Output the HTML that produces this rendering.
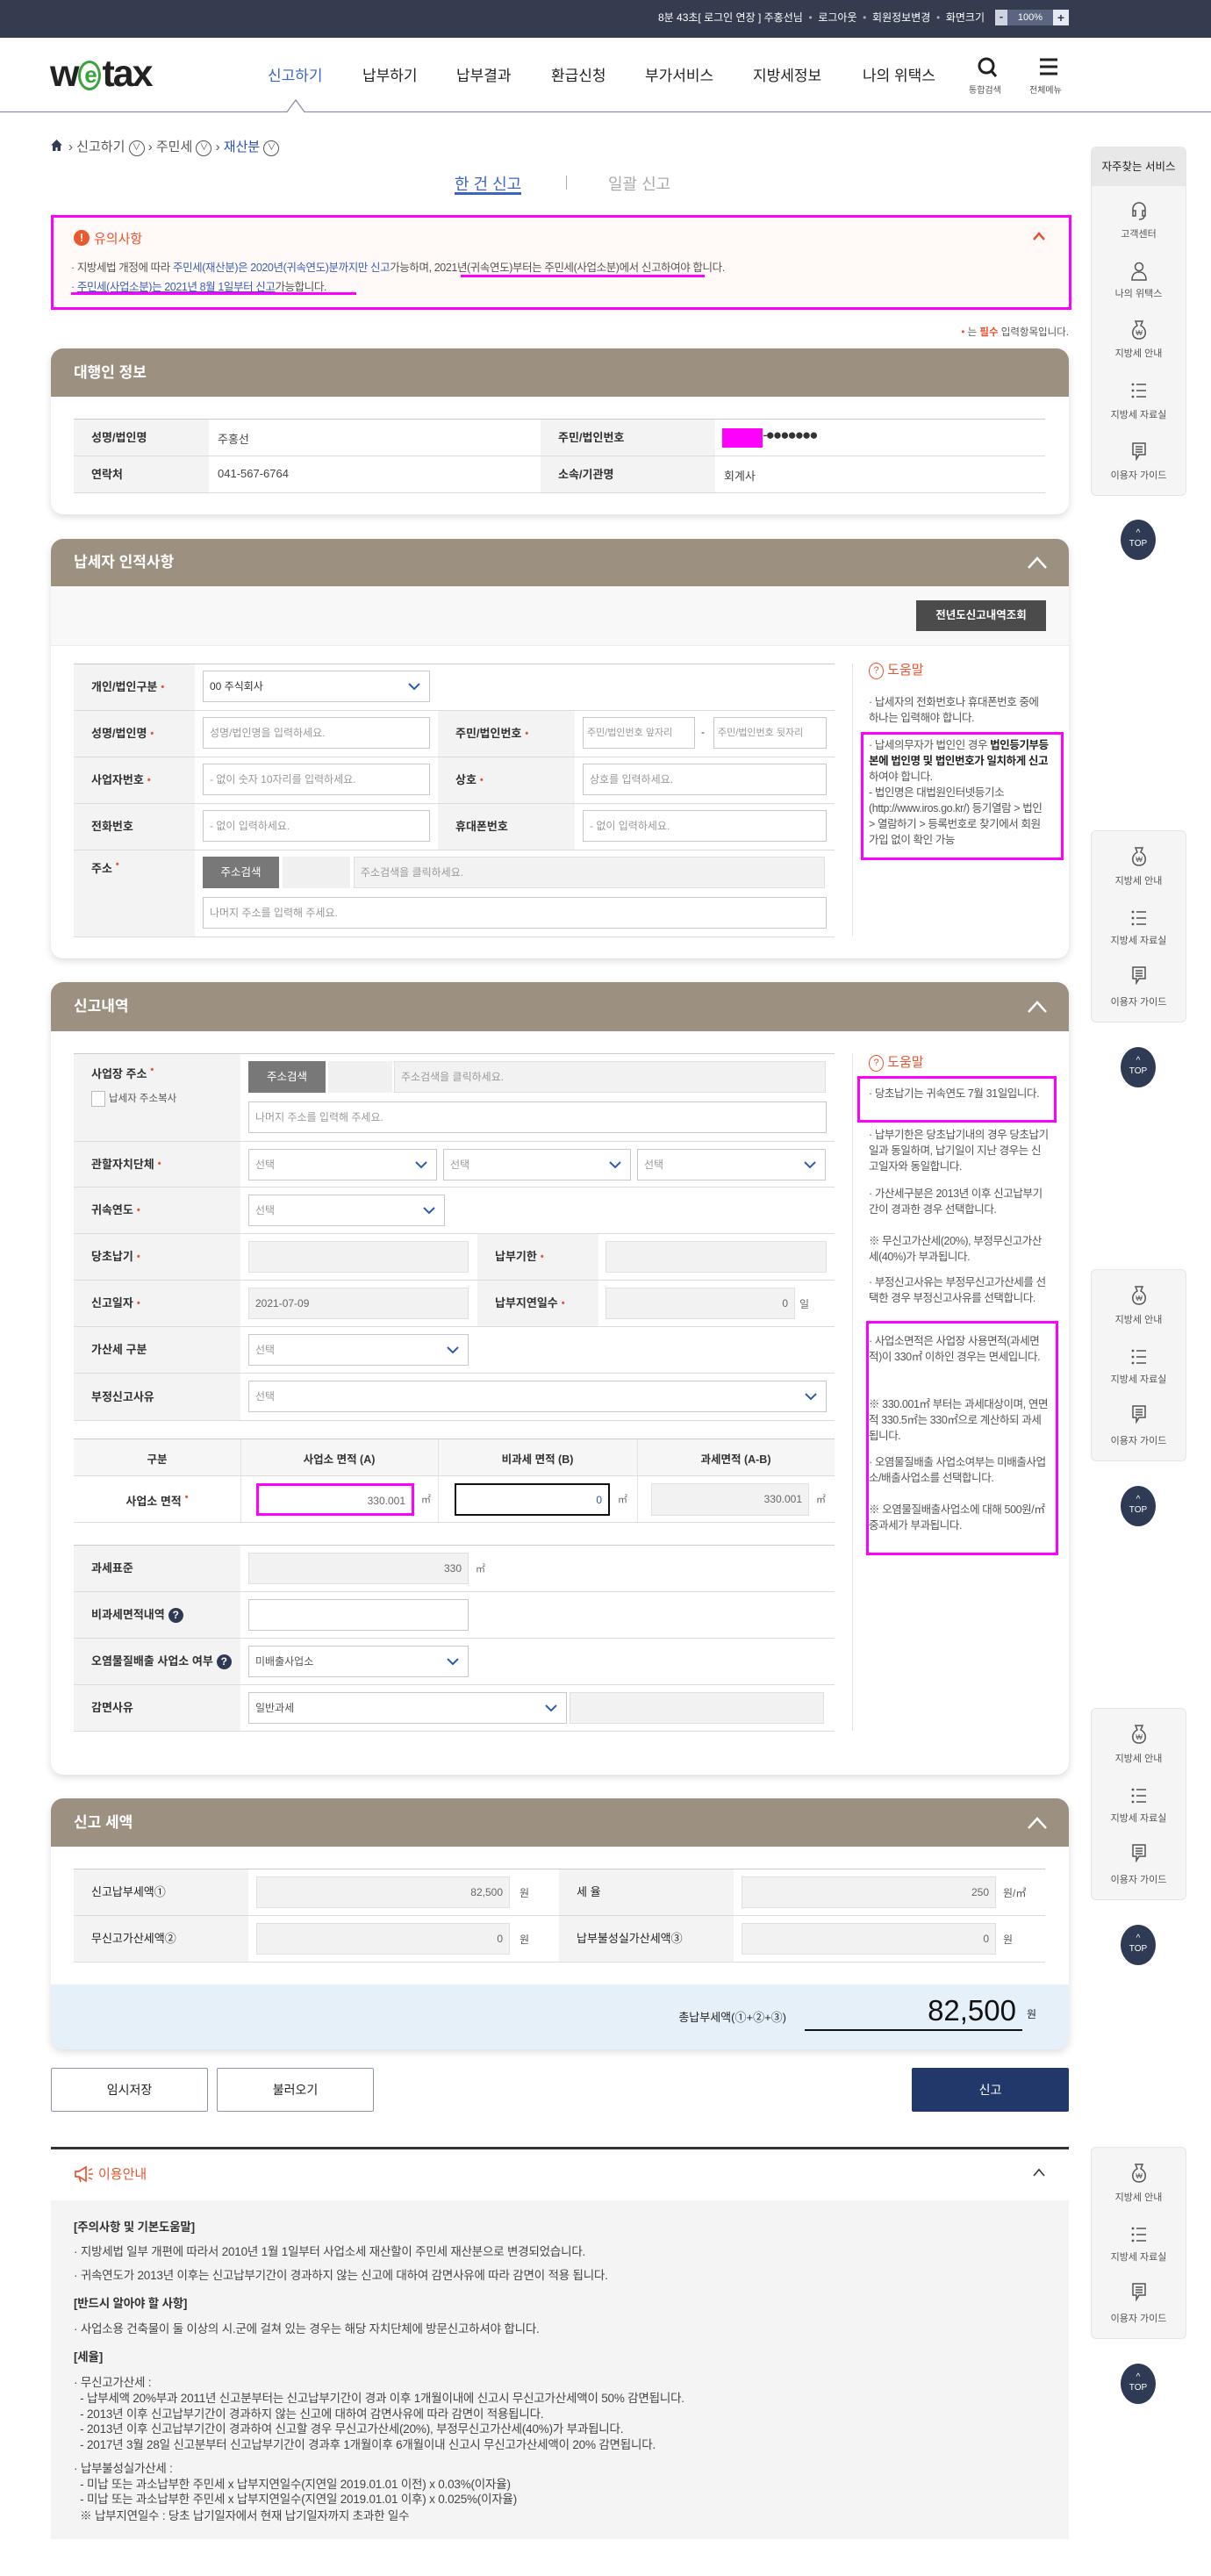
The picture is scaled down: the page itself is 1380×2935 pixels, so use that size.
<!DOCTYPE html>
<html lang="ko"><head><meta charset="utf-8">
<style>
body{margin:0;width:1380px;height:2935px;position:relative;font-family:"Liberation Sans","Noto Sans CJK KR",sans-serif;color:#333;background:#fff;overflow:hidden}
.a{position:absolute}
.card{position:absolute;left:58px;width:1160px;background:#fff;border-radius:14px;box-shadow:0 3px 9px rgba(0,0,0,.14)}
.hd{position:absolute;left:0;top:0;width:1160px;background:#9c9080;border-radius:14px 14px 0 0;color:#fff;font-size:17px;font-weight:bold;box-sizing:border-box;padding-left:26px}
.lb{position:absolute;background:#f3f3f3;font-size:13px;font-weight:bold;color:#333;box-sizing:border-box;padding-left:20px;white-space:nowrap}
.in{position:absolute;box-sizing:border-box;border:1px solid #c8c8c8;background:#fff;height:36px;font-size:12px;color:#999;padding:0 7px;line-height:34px;white-space:nowrap;overflow:hidden}
.g{background:#f2f2f2;border-color:#e0e0e0}
.r{text-align:right}
.hl{position:absolute;height:1px;background:#dcdcdc}
.req::after{content:"•";color:#e8542e;margin-left:4px;font-size:11px;vertical-align:top}
.chev{position:absolute;right:10px;top:13px}
.t{position:absolute;white-space:nowrap}
.help{position:absolute;left:990px;width:205px;font-size:12.5px;line-height:18px;color:#555;letter-spacing:-.4px}
.mg{position:absolute;border:3px solid #f0f;box-sizing:border-box}
.sp{position:absolute;left:1243px;width:109px;background:#f5f5f5;border:1px solid #e6e6e6;border-radius:6px;box-sizing:border-box}
.si{position:absolute;left:0;width:107px;text-align:center;font-size:11px;color:#555}
.top{position:absolute;left:1277px;width:40px;height:46px;border-radius:20px/23px;background:#2f3a55;color:#fff;font-size:10px;text-align:center;line-height:12px;box-sizing:border-box;padding-top:10px}
.qm{display:inline-block;width:17px;height:17px;border-radius:50%;background:#2f3a55;color:#fff;font-size:12px;text-align:center;line-height:17px;margin-left:4px;vertical-align:middle}
.gd{position:absolute;left:84px;font-size:13.5px;color:#444;white-space:nowrap;letter-spacing:-.2px}
.bc{display:inline-block;width:16px;height:16px;border:1px solid #555;border-radius:50%;font-size:10px;line-height:16px;text-align:center;vertical-align:1px}
</style></head><body>

<!-- top bar -->
<div class="a" style="left:0;top:0;width:1380px;height:43px;background:#353c50"></div>
<div class="t" style="right:258px;top:11px;font-size:12px;color:#fff">8분 43초[ 로그인 연장 ] 주홍선님 &nbsp;<span style="color:#aab">•</span>&nbsp; 로그아웃 &nbsp;<span style="color:#aab">•</span>&nbsp; 회원정보변경 &nbsp;<span style="color:#aab">•</span>&nbsp; 화면크기</div>
<div class="a" style="left:1134px;top:11px;width:14px;height:18px;background:#cfd3e0;color:#2f3a55;font-size:13px;text-align:center;line-height:16px;font-weight:bold">-</div>
<div class="a" style="left:1148px;top:11px;width:52px;height:18px;background:#5b6580;color:#fff;font-size:11px;text-align:center;line-height:18px">100%</div>
<div class="a" style="left:1200px;top:11px;width:18px;height:18px;background:#e6e9f2;color:#2f3a55;font-size:14px;text-align:center;line-height:18px;font-weight:bold">+</div>

<!-- header -->
<div class="t" style="left:57px;top:60px;font-size:43px;font-weight:bold;color:#222;letter-spacing:-2px;font-family:'Liberation Sans',sans-serif">w<span style="color:#3aa33a;display:inline-block;border:3px solid #3aa33a;border-radius:50%;width:20px;height:28px;font-size:26px;line-height:26px;text-align:center;vertical-align:4px;margin:0 1px">e</span>tax</div>
<div class="t" style="left:305px;top:72px;font-size:17px;color:#3b64c4">신고하기</div>
<div class="t" style="left:413px;top:72px;font-size:17px;color:#222">납부하기</div>
<div class="t" style="left:520px;top:72px;font-size:17px;color:#222">납부결과</div>
<div class="t" style="left:628px;top:72px;font-size:17px;color:#222">환급신청</div>
<div class="t" style="left:735px;top:72px;font-size:17px;color:#222">부가서비스</div>
<div class="t" style="left:858px;top:72px;font-size:17px;color:#222">지방세정보</div>
<div class="t" style="left:983px;top:72px;font-size:17px;color:#222">나의 위택스</div>
<svg class="a" style="left:1113px;top:64px" width="24" height="26"><circle cx="11" cy="11" r="8" fill="none" stroke="#222" stroke-width="3"/><path d="M16 16l6 7" stroke="#222" stroke-width="3"/></svg>
<div class="t" style="left:1104px;top:94px;font-size:10px;color:#555">통합검색</div>
<svg class="a" style="left:1184px;top:66px" width="22" height="20"><path d="M1 2h20M1 10h20M1 18h20" stroke="#222" stroke-width="3"/></svg>
<div class="t" style="left:1173px;top:94px;font-size:10px;color:#555">전체메뉴</div>
<svg class="a" style="left:0;top:113px" width="1380" height="16"><path d="M0 14.5H327L337 1L347 14.5H1380" fill="none" stroke="#8a8fa2" stroke-width="1.3"/></svg>

<!-- breadcrumb -->
<svg class="a" style="left:57px;top:158px" width="15" height="15"><path d="M7.5 1L1 7.5h2v6.5h3.5V10h2v4H12V7.5h2z" fill="#2f3a55"/></svg>
<div class="t" style="left:78px;top:156px;font-size:15px;color:#555">› 신고하기 <span class="bc">∨</span> › 주민세 <span class="bc">∨</span> › <b style="color:#2b4fb0;font-weight:normal">재산분</b> <span class="bc">∨</span></div>

<!-- tabs -->
<div class="t" style="left:518px;top:196px;font-size:18px;color:#3b64c4">한 건 신고</div>
<div class="a" style="left:518px;top:219px;width:76px;height:3px;background:#3b64c4"></div>
<div class="a" style="left:645px;top:200px;width:1px;height:16px;background:#aaa"></div>
<div class="t" style="left:693px;top:196px;font-size:18px;color:#aaa">일괄 신고</div>

<!-- notice -->
<div class="a" style="left:58px;top:245px;width:1163px;height:108px;background:#fffaf8;border:3px solid #f0f;box-sizing:border-box"></div>
<div class="a" style="left:84px;top:262px;width:18px;height:18px;border-radius:50%;background:#ea5a2e;color:#fff;font-size:13px;font-weight:bold;text-align:center;line-height:18px">!</div>
<div class="t" style="left:107px;top:261px;font-size:15px;color:#e8542e">유의사항</div>
<svg class="a" style="left:1176px;top:263px" width="16" height="12"><path d="M2 10l6-7 6 7" fill="none" stroke="#e8542e" stroke-width="2.5"/></svg>
<div class="t" style="left:81px;top:294px;font-size:12.5px;color:#555;letter-spacing:-.4px">· 지방세법 개정에 따라 <span style="color:#3b5fb5">주민세(재산분)은 2020년(귀속연도)분까지만 신고</span>가능하며, 2021년(귀속연도)부터는 주민세(사업소분)에서 신고하여야 합니다.</div>
<div class="a" style="left:525px;top:313px;width:278px;height:3px;background:#f0f"></div>
<div class="t" style="left:81px;top:316px;font-size:12.5px;color:#3b5fb5;letter-spacing:-.4px">· <u>주민세(사업소분)는 2021년 8월 1일부터 신고</u><span style="color:#555">가능합니다.</span></div>
<div class="a" style="left:81px;top:333px;width:325px;height:3px;background:#f0f"></div>

<div class="t" style="right:162px;top:370px;font-size:11.5px;color:#555"><span style="color:#e8542e">•</span> 는 <b style="color:#e8542e">필수</b> 입력항목입니다.</div>

<!-- Section 1 -->
<div class="card" style="top:397px;height:189px">
 <div class="hd" style="height:55px;line-height:55px">대행인 정보</div>
</div>
<div class="hl" style="left:84px;top:477px;width:1107px;background:#ccc"></div>
<div class="lb" style="left:84px;top:478px;width:154px;height:41px;line-height:41px">성명/법인명</div>
<div class="lb" style="left:616px;top:478px;width:199px;height:41px;line-height:41px">주민/법인번호</div>
<div class="hl" style="left:84px;top:519px;width:1107px"></div>
<div class="lb" style="left:84px;top:520px;width:154px;height:41px;line-height:41px">연락처</div>
<div class="lb" style="left:616px;top:520px;width:199px;height:41px;line-height:41px">소속/기관명</div>
<div class="hl" style="left:84px;top:561px;width:1107px"></div>
<div class="t" style="left:248px;top:490px;font-size:13px;color:#444">주홍선</div>
<div class="a" style="left:823px;top:488px;width:46px;height:22px;background:#f0f"></div>
<div class="t" style="left:869px;top:486px;font-size:17px;color:#333;letter-spacing:-2px">-●●●●●●●</div>
<div class="t" style="left:248px;top:532px;font-size:13px;color:#444">041-567-6764</div>
<div class="t" style="left:825px;top:532px;font-size:13px;color:#444">회계사</div>

<!-- Section 2 -->
<div class="card" style="top:614px;height:478px">
 <div class="hd" style="height:54px;line-height:54px">납세자 인적사항</div>
 <svg class="a" style="left:1112px;top:19px" width="24" height="16"><path d="M2 14L12 3l10 11" fill="none" stroke="#fff" stroke-width="2.5"/></svg>
 <div class="a" style="left:0;top:54px;width:1160px;height:67px;background:#f8f8f8;border-bottom:1px solid #ececec"></div>
 <div class="a" style="left:986px;top:70px;width:148px;height:35px;background:#4b4b4b;color:#fff;font-size:12.5px;font-weight:bold;text-align:center;line-height:35px">전년도신고내역조회</div>
</div>
<div class="hl" style="left:84px;top:756px;width:867px;background:#ccc"></div>
<div class="lb req" style="left:84px;top:757px;width:138px;height:52px;line-height:52px">개인/법인구분</div>
<div class="in" style="left:231px;top:764px;width:259px;color:#333">00 주식회사<svg class="chev" width="14" height="9"><path d="M1 1l6 6 6-6" fill="none" stroke="#2b5bb5" stroke-width="2"/></svg></div>
<div class="hl" style="left:84px;top:809px;width:867px"></div>
<div class="lb req" style="left:84px;top:810px;width:138px;height:52px;line-height:52px">성명/법인명</div>
<div class="in" style="left:231px;top:817px;width:259px">성명/법인명을 입력하세요.</div>
<div class="lb req" style="left:499px;top:810px;width:156px;height:52px;line-height:52px">주민/법인번호</div>
<div class="in" style="left:664px;top:817px;width:128px;font-size:11px;padding:0 4px">주민/법인번호 앞자리</div>
<div class="t" style="left:799px;top:827px;font-size:12px">-</div>
<div class="in" style="left:813px;top:817px;width:129px;font-size:11px;padding:0 4px">주민/법인번호 뒷자리</div>
<div class="hl" style="left:84px;top:862px;width:867px"></div>
<div class="lb req" style="left:84px;top:863px;width:138px;height:52px;line-height:52px">사업자번호</div>
<div class="in" style="left:231px;top:870px;width:259px">- 없이 숫자 10자리를 입력하세요.</div>
<div class="lb req" style="left:499px;top:863px;width:156px;height:52px;line-height:52px">상호</div>
<div class="in" style="left:664px;top:870px;width:278px">상호를 입력하세요.</div>
<div class="hl" style="left:84px;top:915px;width:867px"></div>
<div class="lb" style="left:84px;top:916px;width:138px;height:52px;line-height:52px">전화번호</div>
<div class="in" style="left:231px;top:923px;width:259px">- 없이 입력하세요.</div>
<div class="lb" style="left:499px;top:916px;width:156px;height:52px;line-height:52px">휴대폰번호</div>
<div class="in" style="left:664px;top:923px;width:278px">- 없이 입력하세요.</div>
<div class="hl" style="left:84px;top:968px;width:867px"></div>
<div class="lb req" style="left:84px;top:969px;width:138px;height:98px;padding-top:10px">주소</div>
<div class="a" style="left:231px;top:976px;width:87px;height:36px;background:#787878;color:#fff;font-size:12.5px;text-align:center;line-height:36px">주소검색</div>
<div class="a" style="left:322px;top:976px;width:77px;height:36px;background:#f0f0f0"></div>
<div class="in g" style="left:403px;top:976px;width:537px">주소검색을 클릭하세요.</div>
<div class="in" style="left:231px;top:1022px;width:711px">나머지 주소를 입력해 주세요.</div>
<div class="hl" style="left:84px;top:1067px;width:867px"></div>
<div class="a" style="left:971px;top:756px;width:1px;height:311px;background:#e3e3e3"></div>
<div class="t" style="left:990px;top:752px;font-size:15px;color:#e8542e"><span style="display:inline-block;width:15px;height:17px;border:1.5px solid #e8542e;border-radius:50%;font-size:11px;line-height:17px;text-align:center;vertical-align:1px">?</span> 도움말</div>
<div class="help" style="top:791px">· 납세자의 전화번호나 휴대폰번호 중에 하나는 입력해야 합니다.</div>
<div class="help" style="top:840px">· 납세의무자가 법인인 경우 <b style="color:#222">법인등기부등본에 법인명 및 법인번호가 일치하게 신고</b>하여야 합니다.<br>- 법인명은 대법원인터넷등기소 (http://www.iros.go.kr/) 등기열람 &gt; 법인 &gt; 열람하기 &gt; 등록번호로 찾기에서 회원가입 없이 확인 가능</div>
<div class="mg" style="left:981px;top:834px;width:231px;height:146px"></div>

<!-- Section 3 -->
<div class="card" style="top:1119px;height:903px">
 <div class="hd" style="height:56px;line-height:56px">신고내역</div>
 <svg class="a" style="left:1112px;top:20px" width="24" height="16"><path d="M2 14L12 3l10 11" fill="none" stroke="#fff" stroke-width="2.5"/></svg>
</div>
<div class="hl" style="left:84px;top:1200px;width:867px;background:#ccc"></div>
<div class="lb req" style="left:84px;top:1201px;width:190px;height:99px;padding-top:12px">사업장 주소</div>
<div class="a" style="left:104px;top:1243px;width:14px;height:16px;border:1px solid #bbb;background:#fff"></div>
<div class="t" style="left:124px;top:1243px;font-size:11.5px;color:#555">납세자 주소복사</div>
<div class="a" style="left:283px;top:1209px;width:88px;height:36px;background:#787878;color:#fff;font-size:12.5px;text-align:center;line-height:36px">주소검색</div>
<div class="a" style="left:374px;top:1209px;width:73px;height:36px;background:#f0f0f0"></div>
<div class="in g" style="left:449px;top:1209px;width:492px">주소검색을 클릭하세요.</div>
<div class="in" style="left:283px;top:1255px;width:659px">나머지 주소를 입력해 주세요.</div>
<div class="hl" style="left:84px;top:1300px;width:867px"></div>
<div class="lb req" style="left:84px;top:1301px;width:190px;height:51px;line-height:51px">관할자치단체</div>
<div class="in" style="left:283px;top:1309px;width:215px">선택<svg class="chev" width="14" height="9"><path d="M1 1l6 6 6-6" fill="none" stroke="#2b5bb5" stroke-width="2"/></svg></div>
<div class="in" style="left:505px;top:1309px;width:214px">선택<svg class="chev" width="14" height="9"><path d="M1 1l6 6 6-6" fill="none" stroke="#2b5bb5" stroke-width="2"/></svg></div>
<div class="in" style="left:726px;top:1309px;width:215px">선택<svg class="chev" width="14" height="9"><path d="M1 1l6 6 6-6" fill="none" stroke="#2b5bb5" stroke-width="2"/></svg></div>
<div class="hl" style="left:84px;top:1352px;width:867px"></div>
<div class="lb req" style="left:84px;top:1353px;width:190px;height:52px;line-height:52px">귀속연도</div>
<div class="in" style="left:283px;top:1361px;width:224px">선택<svg class="chev" width="14" height="9"><path d="M1 1l6 6 6-6" fill="none" stroke="#2b5bb5" stroke-width="2"/></svg></div>
<div class="hl" style="left:84px;top:1405px;width:867px"></div>
<div class="lb req" style="left:84px;top:1406px;width:190px;height:52px;line-height:52px">당초납기</div>
<div class="in g" style="left:283px;top:1414px;width:251px"></div>
<div class="lb req" style="left:544px;top:1406px;width:138px;height:52px;line-height:52px">납부기한</div>
<div class="in g" style="left:690px;top:1414px;width:252px"></div>
<div class="hl" style="left:84px;top:1458px;width:867px"></div>
<div class="lb req" style="left:84px;top:1459px;width:190px;height:52px;line-height:52px">신고일자</div>
<div class="in g" style="left:283px;top:1467px;width:251px;color:#666">2021-07-09</div>
<div class="lb req" style="left:544px;top:1459px;width:138px;height:52px;line-height:52px">납부지연일수</div>
<div class="in g r" style="left:690px;top:1467px;width:216px;color:#666">0</div>
<div class="t" style="left:911px;top:1477px;font-size:12px;color:#666">일</div>
<div class="hl" style="left:84px;top:1511px;width:867px"></div>
<div class="lb" style="left:84px;top:1512px;width:190px;height:52px;line-height:52px">가산세 구분</div>
<div class="in" style="left:283px;top:1520px;width:251px">선택<svg class="chev" width="14" height="9"><path d="M1 1l6 6 6-6" fill="none" stroke="#2b5bb5" stroke-width="2"/></svg></div>
<div class="hl" style="left:84px;top:1564px;width:867px"></div>
<div class="lb" style="left:84px;top:1565px;width:190px;height:53px;line-height:53px">부정신고사유</div>
<div class="in" style="left:283px;top:1573px;width:659px">선택<svg class="chev" width="14" height="9"><path d="M1 1l6 6 6-6" fill="none" stroke="#2b5bb5" stroke-width="2"/></svg></div>
<div class="hl" style="left:84px;top:1618px;width:867px"></div>

<!-- area table -->
<div class="hl" style="left:84px;top:1639px;width:867px;background:#ccc"></div>
<div class="a" style="left:84px;top:1640px;width:867px;height:41px;background:#f6f6f6"></div>
<div class="t" style="left:84px;top:1652px;width:190px;text-align:center;font-size:12.5px;font-weight:bold">구분</div>
<div class="t" style="left:274px;top:1652px;width:225px;text-align:center;font-size:12.5px;font-weight:bold">사업소 면적 (A)</div>
<div class="t" style="left:499px;top:1652px;width:227px;text-align:center;font-size:12.5px;font-weight:bold">비과세 면적 (B)</div>
<div class="t" style="left:726px;top:1652px;width:225px;text-align:center;font-size:12.5px;font-weight:bold">과세면적 (A-B)</div>
<div class="a" style="left:274px;top:1640px;width:1px;height:94px;background:#e3e3e3"></div>
<div class="a" style="left:499px;top:1640px;width:1px;height:94px;background:#e3e3e3"></div>
<div class="a" style="left:726px;top:1640px;width:1px;height:94px;background:#e3e3e3"></div>
<div class="hl" style="left:84px;top:1681px;width:867px"></div>
<div class="t req" style="left:84px;top:1700px;width:190px;text-align:center;font-size:13px;font-weight:bold">사업소 면적</div>
<div class="in r" style="left:292px;top:1690px;width:180px;height:37px;border:3px solid #f0f;color:#666">330.001</div>
<div class="t" style="left:480px;top:1700px;font-size:11px;color:#666">㎡</div>
<div class="in r" style="left:518px;top:1690px;width:177px;height:37px;border:2px solid #111;color:#2b5bb5">0</div>
<div class="t" style="left:704px;top:1700px;font-size:11px;color:#666">㎡</div>
<div class="in g r" style="left:742px;top:1690px;width:180px;height:37px;color:#666">330.001</div>
<div class="t" style="left:930px;top:1700px;font-size:11px;color:#666">㎡</div>
<div class="hl" style="left:84px;top:1734px;width:867px"></div>

<div class="hl" style="left:84px;top:1760px;width:867px;background:#ccc"></div>
<div class="lb" style="left:84px;top:1761px;width:190px;height:52px;line-height:52px">과세표준</div>
<div class="in g r" style="left:283px;top:1769px;width:251px;color:#666">330</div>
<div class="t" style="left:542px;top:1779px;font-size:11px;color:#666">㎡</div>
<div class="hl" style="left:84px;top:1813px;width:867px"></div>
<div class="lb" style="left:84px;top:1814px;width:190px;height:52px;line-height:52px">비과세면적내역<span class="qm">?</span></div>
<div class="in" style="left:283px;top:1822px;width:251px"></div>
<div class="hl" style="left:84px;top:1866px;width:867px"></div>
<div class="lb" style="left:84px;top:1867px;width:190px;height:52px;line-height:52px">오염물질배출 사업소 여부<span class="qm">?</span></div>
<div class="in" style="left:283px;top:1875px;width:251px;color:#555">미배출사업소<svg class="chev" width="14" height="9"><path d="M1 1l6 6 6-6" fill="none" stroke="#2b5bb5" stroke-width="2"/></svg></div>
<div class="hl" style="left:84px;top:1919px;width:867px"></div>
<div class="lb" style="left:84px;top:1920px;width:190px;height:52px;line-height:52px">감면사유</div>
<div class="in" style="left:283px;top:1928px;width:363px;color:#555">일반과세<svg class="chev" width="14" height="9"><path d="M1 1l6 6 6-6" fill="none" stroke="#2b5bb5" stroke-width="2"/></svg></div>
<div class="in g" style="left:649px;top:1928px;width:290px"></div>
<div class="hl" style="left:84px;top:1972px;width:867px"></div>

<div class="a" style="left:971px;top:1200px;width:1px;height:772px;background:#e3e3e3"></div>
<div class="t" style="left:990px;top:1199px;font-size:15px;color:#e8542e"><span style="display:inline-block;width:15px;height:17px;border:1.5px solid #e8542e;border-radius:50%;font-size:11px;line-height:17px;text-align:center;vertical-align:1px">?</span> 도움말</div>
<div class="help" style="top:1237px">· 당초납기는 귀속연도 7월 31일입니다.</div>
<div class="mg" style="left:977px;top:1226px;width:227px;height:53px"></div>
<div class="help" style="top:1284px">· 납부기한은 당초납기내의 경우 당초납기일과 동일하며, 납기일이 지난 경우는 신고일자와 동일합니다.</div>
<div class="help" style="top:1351px">· 가산세구분은 2013년 이후 신고납부기간이 경과한 경우 선택합니다.</div>
<div class="help" style="top:1405px">※ 무신고가산세(20%), 부정무신고가산세(40%)가 부과됩니다.</div>
<div class="help" style="top:1452px">· 부정신고사유는 부정무신고가산세를 선택한 경우 부정신고사유를 선택합니다.</div>
<div class="help" style="top:1519px">· 사업소면적은 사업장 사용면적(과세면적)이 330㎡ 이하인 경우는 면세입니다.</div>
<div class="help" style="top:1591px">※ 330.001㎡ 부터는 과세대상이며, 연면적 330.5㎡는 330㎡으로 계산하되 과세됩니다.</div>
<div class="help" style="top:1657px">· 오염물질배출 사업소여부는 미배출사업소/배출사업소를 선택합니다.</div>
<div class="help" style="top:1711px">※ 오염물질배출사업소에 대해 500원/㎡ 중과세가 부과됩니다.</div>
<div class="mg" style="left:987px;top:1505px;width:219px;height:267px"></div>

<!-- Section 4 -->
<div class="card" style="top:2049px;height:286px">
 <div class="hd" style="height:55px;line-height:55px">신고 세액</div>
 <svg class="a" style="left:1112px;top:20px" width="24" height="16"><path d="M2 14L12 3l10 11" fill="none" stroke="#fff" stroke-width="2.5"/></svg>
 <div class="a" style="left:0;top:212px;width:1160px;height:74px;background:#e6f0f9;border-radius:0 0 14px 14px"></div>
</div>
<div class="hl" style="left:84px;top:2129px;width:1107px;background:#ccc"></div>
<div class="lb" style="left:84px;top:2130px;width:199px;height:52px;line-height:52px;font-weight:normal;color:#222">신고납부세액①</div>
<div class="in g r" style="left:292px;top:2138px;width:289px;color:#666">82,500</div>
<div class="t" style="left:592px;top:2148px;font-size:12px;color:#555">원</div>
<div class="lb" style="left:637px;top:2130px;width:199px;height:52px;line-height:52px;font-weight:normal;color:#222">세 율</div>
<div class="in g r" style="left:845px;top:2138px;width:290px;color:#666">250</div>
<div class="t" style="left:1143px;top:2148px;font-size:12px;color:#555">원/㎡</div>
<div class="hl" style="left:84px;top:2182px;width:1107px"></div>
<div class="lb" style="left:84px;top:2183px;width:199px;height:52px;line-height:52px;font-weight:normal;color:#222">무신고가산세액②</div>
<div class="in g r" style="left:292px;top:2191px;width:289px;color:#666">0</div>
<div class="t" style="left:592px;top:2201px;font-size:12px;color:#555">원</div>
<div class="lb" style="left:637px;top:2183px;width:199px;height:52px;line-height:52px;font-weight:normal;color:#222">납부불성실가산세액③</div>
<div class="in g r" style="left:845px;top:2191px;width:290px;color:#666">0</div>
<div class="t" style="left:1143px;top:2201px;font-size:12px;color:#555">원</div>
<div class="hl" style="left:84px;top:2235px;width:1107px"></div>
<div class="t" style="right:484px;top:2288px;font-size:13px;color:#222">총납부세액(①+②+③)</div>
<div class="t" style="right:222px;top:2272px;font-size:33px;color:#111">82,500</div>
<div class="t" style="left:1170px;top:2286px;font-size:12px;color:#222">원</div>
<div class="a" style="left:917px;top:2312px;width:248px;height:2px;background:#111"></div>

<!-- buttons -->
<div class="a" style="left:58px;top:2356px;width:179px;height:50px;border:1px solid #8a93b0;box-sizing:border-box;border-radius:2px;text-align:center;line-height:48px;font-size:14px;color:#222">임시저장</div>
<div class="a" style="left:247px;top:2356px;width:179px;height:50px;border:1px solid #8a93b0;box-sizing:border-box;border-radius:2px;text-align:center;line-height:48px;font-size:14px;color:#222">불러오기</div>
<div class="a" style="left:1039px;top:2356px;width:179px;height:50px;background:#22386b;border-radius:2px;text-align:center;line-height:50px;font-size:14px;color:#fff">신고</div>

<!-- guide -->
<div class="a" style="left:58px;top:2446px;width:1160px;height:3px;background:#333"></div>
<svg class="a" style="left:84px;top:2467px" width="24" height="20"><path d="M2 7h4l8-5v16l-8-5H2z M6 13l2 6" fill="none" stroke="#e8542e" stroke-width="1.7"/><path d="M17 6l4-2M17 10h5M17 14l4 2" stroke="#e8542e" stroke-width="1.5"/></svg>
<div class="t" style="left:112px;top:2466px;font-size:15px;color:#e8542e">이용안내</div>
<svg class="a" style="left:1177px;top:2470px" width="14" height="10"><path d="M1 9l6-7 6 7" fill="none" stroke="#333" stroke-width="1.6"/></svg>
<div class="a" style="left:58px;top:2507px;width:1160px;height:386px;background:#f4f4f4"></div>
<div class="gd" style="top:2526px;font-weight:bold;color:#333">[주의사항 및 기본도움말]</div>
<div class="gd" style="top:2554px">· 지방세법 일부 개편에 따라서 2010년 1월 1일부터 사업소세 재산할이 주민세 재산분으로 변경되었습니다.</div>
<div class="gd" style="top:2581px">· 귀속연도가 2013년 이후는 신고납부기간이 경과하지 않는 신고에 대하여 감면사유에 따라 감면이 적용 됩니다.</div>
<div class="gd" style="top:2613px;font-weight:bold;color:#333">[반드시 알아야 할 사항]</div>
<div class="gd" style="top:2642px">· 사업소용 건축물이 둘 이상의 시.군에 걸쳐 있는 경우는 해당 자치단체에 방문신고하셔야 합니다.</div>
<div class="gd" style="top:2674px;font-weight:bold;color:#333">[세율]</div>
<div class="gd" style="top:2703px">· 무신고가산세 :</div>
<div class="gd" style="top:2721px">&nbsp;&nbsp;- 납부세액 20%부과 2011년 신고분부터는 신고납부기간이 경과 이후 1개월이내에 신고시 무신고가산세액이 50% 감면됩니다.</div>
<div class="gd" style="top:2739px">&nbsp;&nbsp;- 2013년 이후 신고납부기간이 경과하지 않는 신고에 대하여 감면사유에 따라 감면이 적용됩니다.</div>
<div class="gd" style="top:2756px">&nbsp;&nbsp;- 2013년 이후 신고납부기간이 경과하여 신고할 경우 무신고가산세(20%), 부정무신고가산세(40%)가 부과됩니다.</div>
<div class="gd" style="top:2774px">&nbsp;&nbsp;- 2017년 3월 28일 신고분부터 신고납부기간이 경과후 1개월이후 6개월이내 신고시 무신고가산세액이 20% 감면됩니다.</div>
<div class="gd" style="top:2801px">· 납부불성실가산세 :</div>
<div class="gd" style="top:2819px">&nbsp;&nbsp;- 미납 또는 과소납부한 주민세 x 납부지연일수(지연일 2019.01.01 이전) x 0.03%(이자율)</div>
<div class="gd" style="top:2836px">&nbsp;&nbsp;- 미납 또는 과소납부한 주민세 x 납부지연일수(지연일 2019.01.01 이후) x 0.025%(이자율)</div>
<div class="gd" style="top:2855px">&nbsp;&nbsp;※ 납부지연일수 : 당초 납기일자에서 현재 납기일자까지 초과한 일수</div>

<!-- sidebar panel 1 -->
<div class="sp" style="top:167px;height:398px">
 <div class="a" style="left:0;top:0;width:107px;height:44px;background:#e8e8e8;border-radius:6px 6px 0 0;text-align:center;line-height:44px;font-size:12.5px;color:#222">자주찾는 서비스</div>
 <svg class="a" style="left:44px;top:61px" width="20" height="22"><path d="M3 12V9a7 7 0 0114 0v3M3 11h3v6H3zM14 11h3v6h-3zM16 17c0 3-3 4-6 4" fill="none" stroke="#555" stroke-width="1.5"/></svg>
 <div class="si" style="top:90px">고객센터</div>
 <svg class="a" style="left:44px;top:130px" width="20" height="22"><circle cx="10" cy="6" r="4.5" fill="none" stroke="#555" stroke-width="1.5"/><path d="M2 21c0-6 3-9 8-9s8 3 8 9z" fill="none" stroke="#555" stroke-width="1.5"/></svg>
 <div class="si" style="top:158px">나의 위택스</div>
 <svg class="a" style="left:45px;top:197px" width="18" height="22"><path d="M5 1h8l-2 5c4 2 6 6 5 10-1 4-4 5-7 5s-6-1-7-5c-1-4 1-8 5-10z" fill="none" stroke="#555" stroke-width="1.5"/><text x="9" y="17" font-size="8" text-anchor="middle" fill="#555">₩</text></svg>
 <div class="si" style="top:226px">지방세 안내</div>
 <svg class="a" style="left:45px;top:267px" width="18" height="20"><path d="M6 3h11M6 10h11M6 17h11" stroke="#555" stroke-width="1.6"/><circle cx="2" cy="3" r="1.4" fill="#555"/><circle cx="2" cy="10" r="1.4" fill="#555"/><circle cx="2" cy="17" r="1.4" fill="#555"/></svg>
 <div class="si" style="top:296px">지방세 자료실</div>
 <svg class="a" style="left:45px;top:335px" width="18" height="22"><path d="M2 2h14v13H9l-3 5v-5H2z M5 6h8M5 9h8M5 12h8" fill="none" stroke="#555" stroke-width="1.5"/></svg>
 <div class="si" style="top:365px">이용자 가이드</div>
</div>
<div class="top" style="top:592px">^<br>TOP</div>

<div class="sp" style="top:946px;height:219px">
 <svg class="a" style="left:45px;top:18px" width="18" height="22"><path d="M5 1h8l-2 5c4 2 6 6 5 10-1 4-4 5-7 5s-6-1-7-5c-1-4 1-8 5-10z" fill="none" stroke="#555" stroke-width="1.5"/><text x="9" y="17" font-size="8" text-anchor="middle" fill="#555">₩</text></svg>
 <div class="si" style="top:48px">지방세 안내</div>
 <svg class="a" style="left:45px;top:89px" width="18" height="20"><path d="M6 3h11M6 10h11M6 17h11" stroke="#555" stroke-width="1.6"/><circle cx="2" cy="3" r="1.4" fill="#555"/><circle cx="2" cy="10" r="1.4" fill="#555"/><circle cx="2" cy="17" r="1.4" fill="#555"/></svg>
 <div class="si" style="top:116px">지방세 자료실</div>
 <svg class="a" style="left:45px;top:153px" width="18" height="22"><path d="M2 2h14v13H9l-3 5v-5H2z M5 6h8M5 9h8M5 12h8" fill="none" stroke="#555" stroke-width="1.5"/></svg>
 <div class="si" style="top:186px">이용자 가이드</div>
</div>
<div class="top" style="top:1193px">^<br>TOP</div>

<div class="sp" style="top:1446px;height:219px">
 <svg class="a" style="left:45px;top:18px" width="18" height="22"><path d="M5 1h8l-2 5c4 2 6 6 5 10-1 4-4 5-7 5s-6-1-7-5c-1-4 1-8 5-10z" fill="none" stroke="#555" stroke-width="1.5"/><text x="9" y="17" font-size="8" text-anchor="middle" fill="#555">₩</text></svg>
 <div class="si" style="top:48px">지방세 안내</div>
 <svg class="a" style="left:45px;top:89px" width="18" height="20"><path d="M6 3h11M6 10h11M6 17h11" stroke="#555" stroke-width="1.6"/><circle cx="2" cy="3" r="1.4" fill="#555"/><circle cx="2" cy="10" r="1.4" fill="#555"/><circle cx="2" cy="17" r="1.4" fill="#555"/></svg>
 <div class="si" style="top:116px">지방세 자료실</div>
 <svg class="a" style="left:45px;top:153px" width="18" height="22"><path d="M2 2h14v13H9l-3 5v-5H2z M5 6h8M5 9h8M5 12h8" fill="none" stroke="#555" stroke-width="1.5"/></svg>
 <div class="si" style="top:186px">이용자 가이드</div>
</div>
<div class="top" style="top:1693px">^<br>TOP</div>

<div class="sp" style="top:1946px;height:219px">
 <svg class="a" style="left:45px;top:18px" width="18" height="22"><path d="M5 1h8l-2 5c4 2 6 6 5 10-1 4-4 5-7 5s-6-1-7-5c-1-4 1-8 5-10z" fill="none" stroke="#555" stroke-width="1.5"/><text x="9" y="17" font-size="8" text-anchor="middle" fill="#555">₩</text></svg>
 <div class="si" style="top:48px">지방세 안내</div>
 <svg class="a" style="left:45px;top:89px" width="18" height="20"><path d="M6 3h11M6 10h11M6 17h11" stroke="#555" stroke-width="1.6"/><circle cx="2" cy="3" r="1.4" fill="#555"/><circle cx="2" cy="10" r="1.4" fill="#555"/><circle cx="2" cy="17" r="1.4" fill="#555"/></svg>
 <div class="si" style="top:116px">지방세 자료실</div>
 <svg class="a" style="left:45px;top:153px" width="18" height="22"><path d="M2 2h14v13H9l-3 5v-5H2z M5 6h8M5 9h8M5 12h8" fill="none" stroke="#555" stroke-width="1.5"/></svg>
 <div class="si" style="top:186px">이용자 가이드</div>
</div>
<div class="top" style="top:2193px">^<br>TOP</div>

<div class="sp" style="top:2446px;height:219px">
 <svg class="a" style="left:45px;top:18px" width="18" height="22"><path d="M5 1h8l-2 5c4 2 6 6 5 10-1 4-4 5-7 5s-6-1-7-5c-1-4 1-8 5-10z" fill="none" stroke="#555" stroke-width="1.5"/><text x="9" y="17" font-size="8" text-anchor="middle" fill="#555">₩</text></svg>
 <div class="si" style="top:48px">지방세 안내</div>
 <svg class="a" style="left:45px;top:89px" width="18" height="20"><path d="M6 3h11M6 10h11M6 17h11" stroke="#555" stroke-width="1.6"/><circle cx="2" cy="3" r="1.4" fill="#555"/><circle cx="2" cy="10" r="1.4" fill="#555"/><circle cx="2" cy="17" r="1.4" fill="#555"/></svg>
 <div class="si" style="top:116px">지방세 자료실</div>
 <svg class="a" style="left:45px;top:153px" width="18" height="22"><path d="M2 2h14v13H9l-3 5v-5H2z M5 6h8M5 9h8M5 12h8" fill="none" stroke="#555" stroke-width="1.5"/></svg>
 <div class="si" style="top:186px">이용자 가이드</div>
</div>
<div class="top" style="top:2693px">^<br>TOP</div>

</body></html>
